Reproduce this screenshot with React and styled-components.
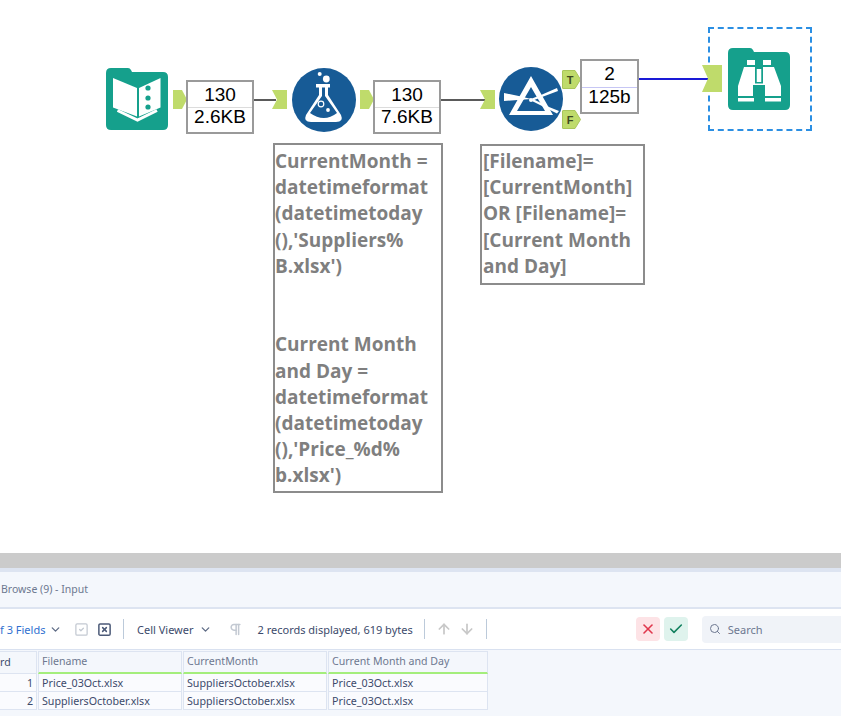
import styled, { createGlobalStyle } from 'styled-components'
import { ChevronDown, ArrowUp, ArrowDown, X, Check, Search, Pilcrow, SquareCheck, SquareX } from 'lucide-react'

const Global = createGlobalStyle`
  html, body { margin: 0; padding: 0; background: #fff; overflow: hidden; }
  * { box-sizing: border-box; }
`

const Page = styled.div`
  width: 841px;
  height: 716px;
  display: flex;
  flex-direction: column;
  overflow: hidden;
  font-family: 'Noto Sans', sans-serif;
`

const Canvas = styled.div`
  position: relative;
  height: 553px;
  flex: none;
  background: #fff;
`

const Placed = styled.div`
  position: absolute;
  left: ${p => p.$x}px;
  top: ${p => p.$y}px;
  width: ${p => p.$w}px;
  height: ${p => p.$h}px;
`

const Wire = styled(Placed)`
  background: ${p => p.$color || '#5a5a5a'};
`

const CountBox = styled(Placed)`
  background: #fff;
  border: 2px solid #9a9a9a;
  padding-bottom: 2px;
  display: flex;
  flex-direction: column;
  align-items: center;
  justify-content: center;
  font-family: 'Liberation Sans', Arial, sans-serif;
  font-size: 19px;
  line-height: 22.5px;
  color: #000;
  &::before {
    content: '';
    position: absolute;
    left: 0;
    right: 0;
    top: 50%;
    height: 1px;
    background: ${p => p.$line || '#dcdcdc'};
  }
  span { position: relative; }
`

const Comment = styled(Placed)`
  border: 2px solid #8c8c8c;
  background: #fff;
  padding: ${p => p.$pad};
  font-family: 'Open Sans', sans-serif;
  font-weight: 700;
  font-size: 19px;
  line-height: 26.2px;
  color: #7f7f7f;
  white-space: pre;
`

const Selection = styled(Placed)`
  border: 2px dashed #2b8fe3;
`

const AnchorLabel = styled.span`
  position: absolute;
  inset: 0 3px 0 0;
  display: flex;
  align-items: center;
  justify-content: center;
  font-family: 'Liberation Sans', Arial, sans-serif;
  font-weight: 700;
  font-size: 11px;
  color: #3f4a22;
`

const GREEN = '#bfdb6b'

function OutAnchor({ x, y }) {
  return (
    <Placed $x={x} $y={y} $w={14} $h={19}>
      <svg width="14" height="19" viewBox="0 0 14 19">
        <path d="M0 0H9L14 9.5L9 19H0Z" fill={GREEN} />
      </svg>
    </Placed>
  )
}

function InAnchor({ x, y, w = 15, h = 19, notch = 5 }) {
  return (
    <Placed $x={x} $y={y} $w={w} $h={h}>
      <svg width={w} height={h} viewBox={`0 0 ${w} ${h}`}>
        <path d={`M0 0H${w}V${h}H0L${notch} ${h / 2}Z`} fill={GREEN} />
      </svg>
    </Placed>
  )
}

function LetterAnchor({ x, y, letter }) {
  return (
    <Placed $x={x} $y={y} $w={19} $h={19}>
      <svg width="19" height="19" viewBox="0 0 19 19">
        <path d="M1 0.5H13L18.5 9.5L13 18.5H1Q0.5 18.5 0.5 18V1Q0.5 0.5 1 0.5Z" fill={GREEN} stroke="#a9c65a" />
      </svg>
      <AnchorLabel>{letter}</AnchorLabel>
    </Placed>
  )
}

const TEAL = '#15a08c'
const FOLDER = 'M5 0H22Q24 0 25 2L26 4H57Q62 4 62 9V57Q62 62 57 62H5Q0 62 0 57V5Q0 0 5 0Z'

function BookIcon() {
  return (
    <svg width="62" height="62" viewBox="0 0 62 62">
      <path d={FOLDER} fill={TEAL} />
      <path d="M7 10L31 20V48.5L7 39.5Z" fill="#fff" />
      <path d="M33 20L54.5 10V39.5L33 48.5Z" fill="#fff" />
      <circle cx="42" cy="20" r="2.6" fill={TEAL} />
      <circle cx="42" cy="30" r="2.6" fill={TEAL} />
      <circle cx="42" cy="39" r="2.6" fill={TEAL} />
      <path d="M11.5 42.5L31.5 52L51 42.5" fill="none" stroke="#fff" strokeWidth="3" />
    </svg>
  )
}

function BinocularsIcon() {
  return (
    <svg width="62" height="62" viewBox="0 0 62 62">
      <path d={FOLDER} fill={TEAL} />
      <g fill="#fff">
        <rect x="19" y="12" width="8" height="5" />
        <rect x="35" y="12" width="8" height="5" />
        <rect x="28.5" y="21" width="5" height="13" />
        <path d="M16 19H27V35.5H35V19H46L53 38V48H37V37H25V48H10V38Z" />
        <rect x="10" y="50" width="16" height="3.5" />
        <rect x="37" y="50" width="16" height="3.5" />
      </g>
      <rect x="27" y="19" width="1.5" height="16" fill={TEAL} />
      <rect x="33.5" y="19" width="1.5" height="16" fill={TEAL} />
    </svg>
  )
}

const BLUE = '#175b96'

function FlaskIcon() {
  return (
    <svg width="64" height="64" viewBox="0 0 64 64">
      <circle cx="32" cy="32" r="32" fill={BLUE} />
      <circle cx="34.3" cy="11" r="3.4" fill="#fff" />
      <circle cx="27.7" cy="6" r="2" fill="#fff" />
      <path d="M24 16H38V19.5H36V27L49 47Q52 54 44 54H19Q11 54 14 47L27 27V19.5H24Z" fill="#fff" />
      <path d="M30 19.5H33V28L45 45Q32 55 18 45L30 28Z" fill={BLUE} />
      <circle cx="29" cy="36" r="2.8" fill="none" stroke="#fff" strokeWidth="1.2" />
      <circle cx="36" cy="42" r="1.9" fill="#fff" />
    </svg>
  )
}

function PrismIcon() {
  return (
    <svg width="64" height="64" viewBox="0 0 64 64">
      <circle cx="32" cy="32" r="32" fill={BLUE} />
      <path d="M32 9L54 48H10ZM32 20L18 44H46Z" fill="#fff" fillRule="evenodd" />
      <path d="M5 26L22 29.5L32 32L5 34Z" fill="#fff" />
      <path d="M33 31.5L42 28L58 21L59 24L43 30L34 33.5Z" fill="#fff" />
      <path d="M34 32L50 40L60 44L58 46.5L47 41L33 34Z" fill="#fff" />
      <circle cx="32" cy="33" r="2" fill="#fff" />
    </svg>
  )
}

const Splitter = styled.div`
  height: 15px;
  flex: none;
  background: #cbcbcb;
`

const Panel = styled.div`
  flex: 1;
  display: flex;
  flex-direction: column;
  background: #f4f7fc;
  border-top: 4px solid #dde4f1;
`

const TitleBar = styled.div`
  height: 37px;
  flex: none;
  display: flex;
  align-items: center;
  padding: 0 0 1px 1px;
  border-bottom: 2px solid #dde4f1;
  font-size: 10.5px;
  color: #6d7890;
`

const Toolbar = styled.div`
  height: 41px;
  flex: none;
  display: flex;
  align-items: center;
  background: #fff;
  border-bottom: 1px solid #d9e1f0;
  font-size: 11px;
  color: #3c4a6b;
`

const FieldsLabel = styled.span`
  width: 44px;
  flex: none;
  color: #2f6fd0;
  white-space: nowrap;
`

const ToolIcon = styled.span`
  display: flex;
  flex: none;
  margin-left: ${p => p.$gap || 0}px;
  color: ${p => p.$color || '#5e6b85'};
`

const Sep = styled.span`
  flex: none;
  width: 1px;
  height: 20px;
  margin-left: ${p => p.$gap}px;
  background: #bccada;
`

const ToolText = styled.span`
  margin-left: ${p => p.$gap}px;
  white-space: nowrap;
`

const StatusButton = styled.span`
  flex: none;
  width: 24px;
  height: 24px;
  margin-left: ${p => p.$gap}px;
  border-radius: 4px;
  display: flex;
  align-items: center;
  justify-content: center;
  background: ${p => p.$bg};
  color: ${p => p.$color};
`

const SearchBox = styled.div`
  flex: none;
  width: 160px;
  height: 27px;
  margin-left: 14px;
  padding-left: 7px;
  display: flex;
  align-items: center;
  gap: 7px;
  border-radius: 4px;
  background: #f0f3f8;
  color: #6d7890;
  font-size: 11px;
`

const Table = styled.div`
  display: grid;
  grid-template-columns: 37px 145px 145px 161px;
  grid-auto-rows: auto;
  padding-top: 1px;
`

const HeaderCell = styled.div`
  height: 23px;
  padding: 0 0 2px ${p => p.$first ? 0 : 3}px;
  margin-left: ${p => p.$first ? 0 : 1}px;
  display: flex;
  align-items: center;
  background: #f4f7fc;
  border: 1px solid #dde4f1;
  border-left-width: ${p => p.$first ? 0 : 1}px;
  border-bottom: ${p => p.$first ? '1px solid #dde4f1' : '2px solid #a4ee7c'};
  font-size: 10.6px;
  color: ${p => p.$first ? '#3c4a6b' : '#6d7890'};
  white-space: nowrap;
  overflow: hidden;
`

const Cell = styled.div`
  height: 18px;
  margin-left: ${p => p.$first ? 0 : 1}px;
  padding: 0 3px;
  display: flex;
  align-items: center;
  justify-content: ${p => p.$first ? 'flex-end' : 'flex-start'};
  background: #fafbfe;
  border: 1px solid #dde4f1;
  border-left-width: ${p => p.$first ? 0 : 1}px;
  border-top-width: 0;
  font-size: 10.7px;
  color: #3c4a6b;
  white-space: nowrap;
`

const rows = [
  ['1', 'Price_03Oct.xlsx', 'SuppliersOctober.xlsx', 'Price_03Oct.xlsx'],
  ['2', 'SuppliersOctober.xlsx', 'SuppliersOctober.xlsx', 'Price_03Oct.xlsx'],
]

const comment1 = `CurrentMonth =
datetimeformat
(datetimetoday
(),'Suppliers%
B.xlsx')


Current Month
and Day =
datetimeformat
(datetimetoday
(),'Price_%d%
b.xlsx')`

const comment2 = `[Filename]=
[CurrentMonth]
OR [Filename]=
[Current Month
and Day]`

export default function App() {
  return (
    <Page>
      <Global />
      <Canvas>
        <Selection $x={708} $y={27} $w={104} $h={104} />

        <Placed $x={106} $y={68} $w={62} $h={62}><BookIcon /></Placed>
        <OutAnchor x={173} y={90} />
        <Wire $x={254} $y={99} $w={22} $h={2} />
        <InAnchor x={272} y={90} />
        <Placed $x={292} $y={68} $w={64} $h={64}><FlaskIcon /></Placed>
        <OutAnchor x={360} y={90} />
        <Wire $x={441} $y={99} $w={44} $h={2} />
        <InAnchor x={480} y={90} />
        <Placed $x={499} $y={67} $w={64} $h={64}><PrismIcon /></Placed>
        <LetterAnchor x={562} y={70} letter="T" />
        <LetterAnchor x={562} y={110} letter="F" />
        <Wire $x={638} $y={78} $w={70} $h={2} $color="#1a1ad6" />
        <InAnchor x={702} y={65} w={20} h={27} notch={6} />
        <Placed $x={728} $y={48} $w={62} $h={62}><BinocularsIcon /></Placed>

        <CountBox $x={186} $y={80} $w={68} $h={54}><span>130</span><span>2.6KB</span></CountBox>
        <CountBox $x={373} $y={80} $w={68} $h={54}><span>130</span><span>7.6KB</span></CountBox>
        <CountBox $x={580} $y={59} $w={59} $h={55} $line="#c6c6f4"><span>2</span><span>125b</span></CountBox>

        <Comment $x={273} $y={143} $w={170} $h={350} $pad="3px 0 0 0">{comment1}</Comment>
        <Comment $x={480} $y={144} $w={165} $h={141} $pad="2px 0 0 1px">{comment2}</Comment>
      </Canvas>
      <Splitter />
      <Panel>
        <TitleBar>Browse (9) - Input</TitleBar>
        <Toolbar>
          <FieldsLabel>f 3 Fields</FieldsLabel>
          <ToolIcon $gap={5}><ChevronDown size={13} strokeWidth={2.4} /></ToolIcon>
          <ToolIcon $gap={12} $color="#c3c9d2"><SquareCheck size={15} /></ToolIcon>
          <ToolIcon $gap={8} $color="#4c5a78"><SquareX size={15} strokeWidth={2.4} /></ToolIcon>
          <Sep $gap={11} />
          <ToolText $gap={13}>Cell Viewer</ToolText>
          <ToolIcon $gap={5}><ChevronDown size={13} strokeWidth={2.4} /></ToolIcon>
          <ToolIcon $gap={16} $color="#c3c9d2"><Pilcrow size={15} strokeWidth={2.4} /></ToolIcon>
          <ToolText $gap={15}>2 records displayed, 619 bytes</ToolText>
          <Sep $gap={11} />
          <ToolIcon $gap={11} $color="#c8c8c8"><ArrowUp size={16} strokeWidth={2.6} /></ToolIcon>
          <ToolIcon $gap={7} $color="#c8c8c8"><ArrowDown size={16} strokeWidth={2.6} /></ToolIcon>
          <Sep $gap={11} />
          <StatusButton $gap={149} $bg="#fde3e6" $color="#e0364c"><X size={16} strokeWidth={2.4} /></StatusButton>
          <StatusButton $gap={4} $bg="#dff3ed" $color="#13815f"><Check size={16} strokeWidth={2.4} /></StatusButton>
          <SearchBox><Search size={12} />Search</SearchBox>
        </Toolbar>
        <Table>
          <HeaderCell $first>rd</HeaderCell>
          <HeaderCell>Filename</HeaderCell>
          <HeaderCell>CurrentMonth</HeaderCell>
          <HeaderCell>Current Month and Day</HeaderCell>
          {rows.map(row =>
            row.map((text, i) => (
              <Cell key={row[0] + i} $first={i === 0}>{text}</Cell>
            ))
          )}
        </Table>
      </Panel>
    </Page>
  )
}
